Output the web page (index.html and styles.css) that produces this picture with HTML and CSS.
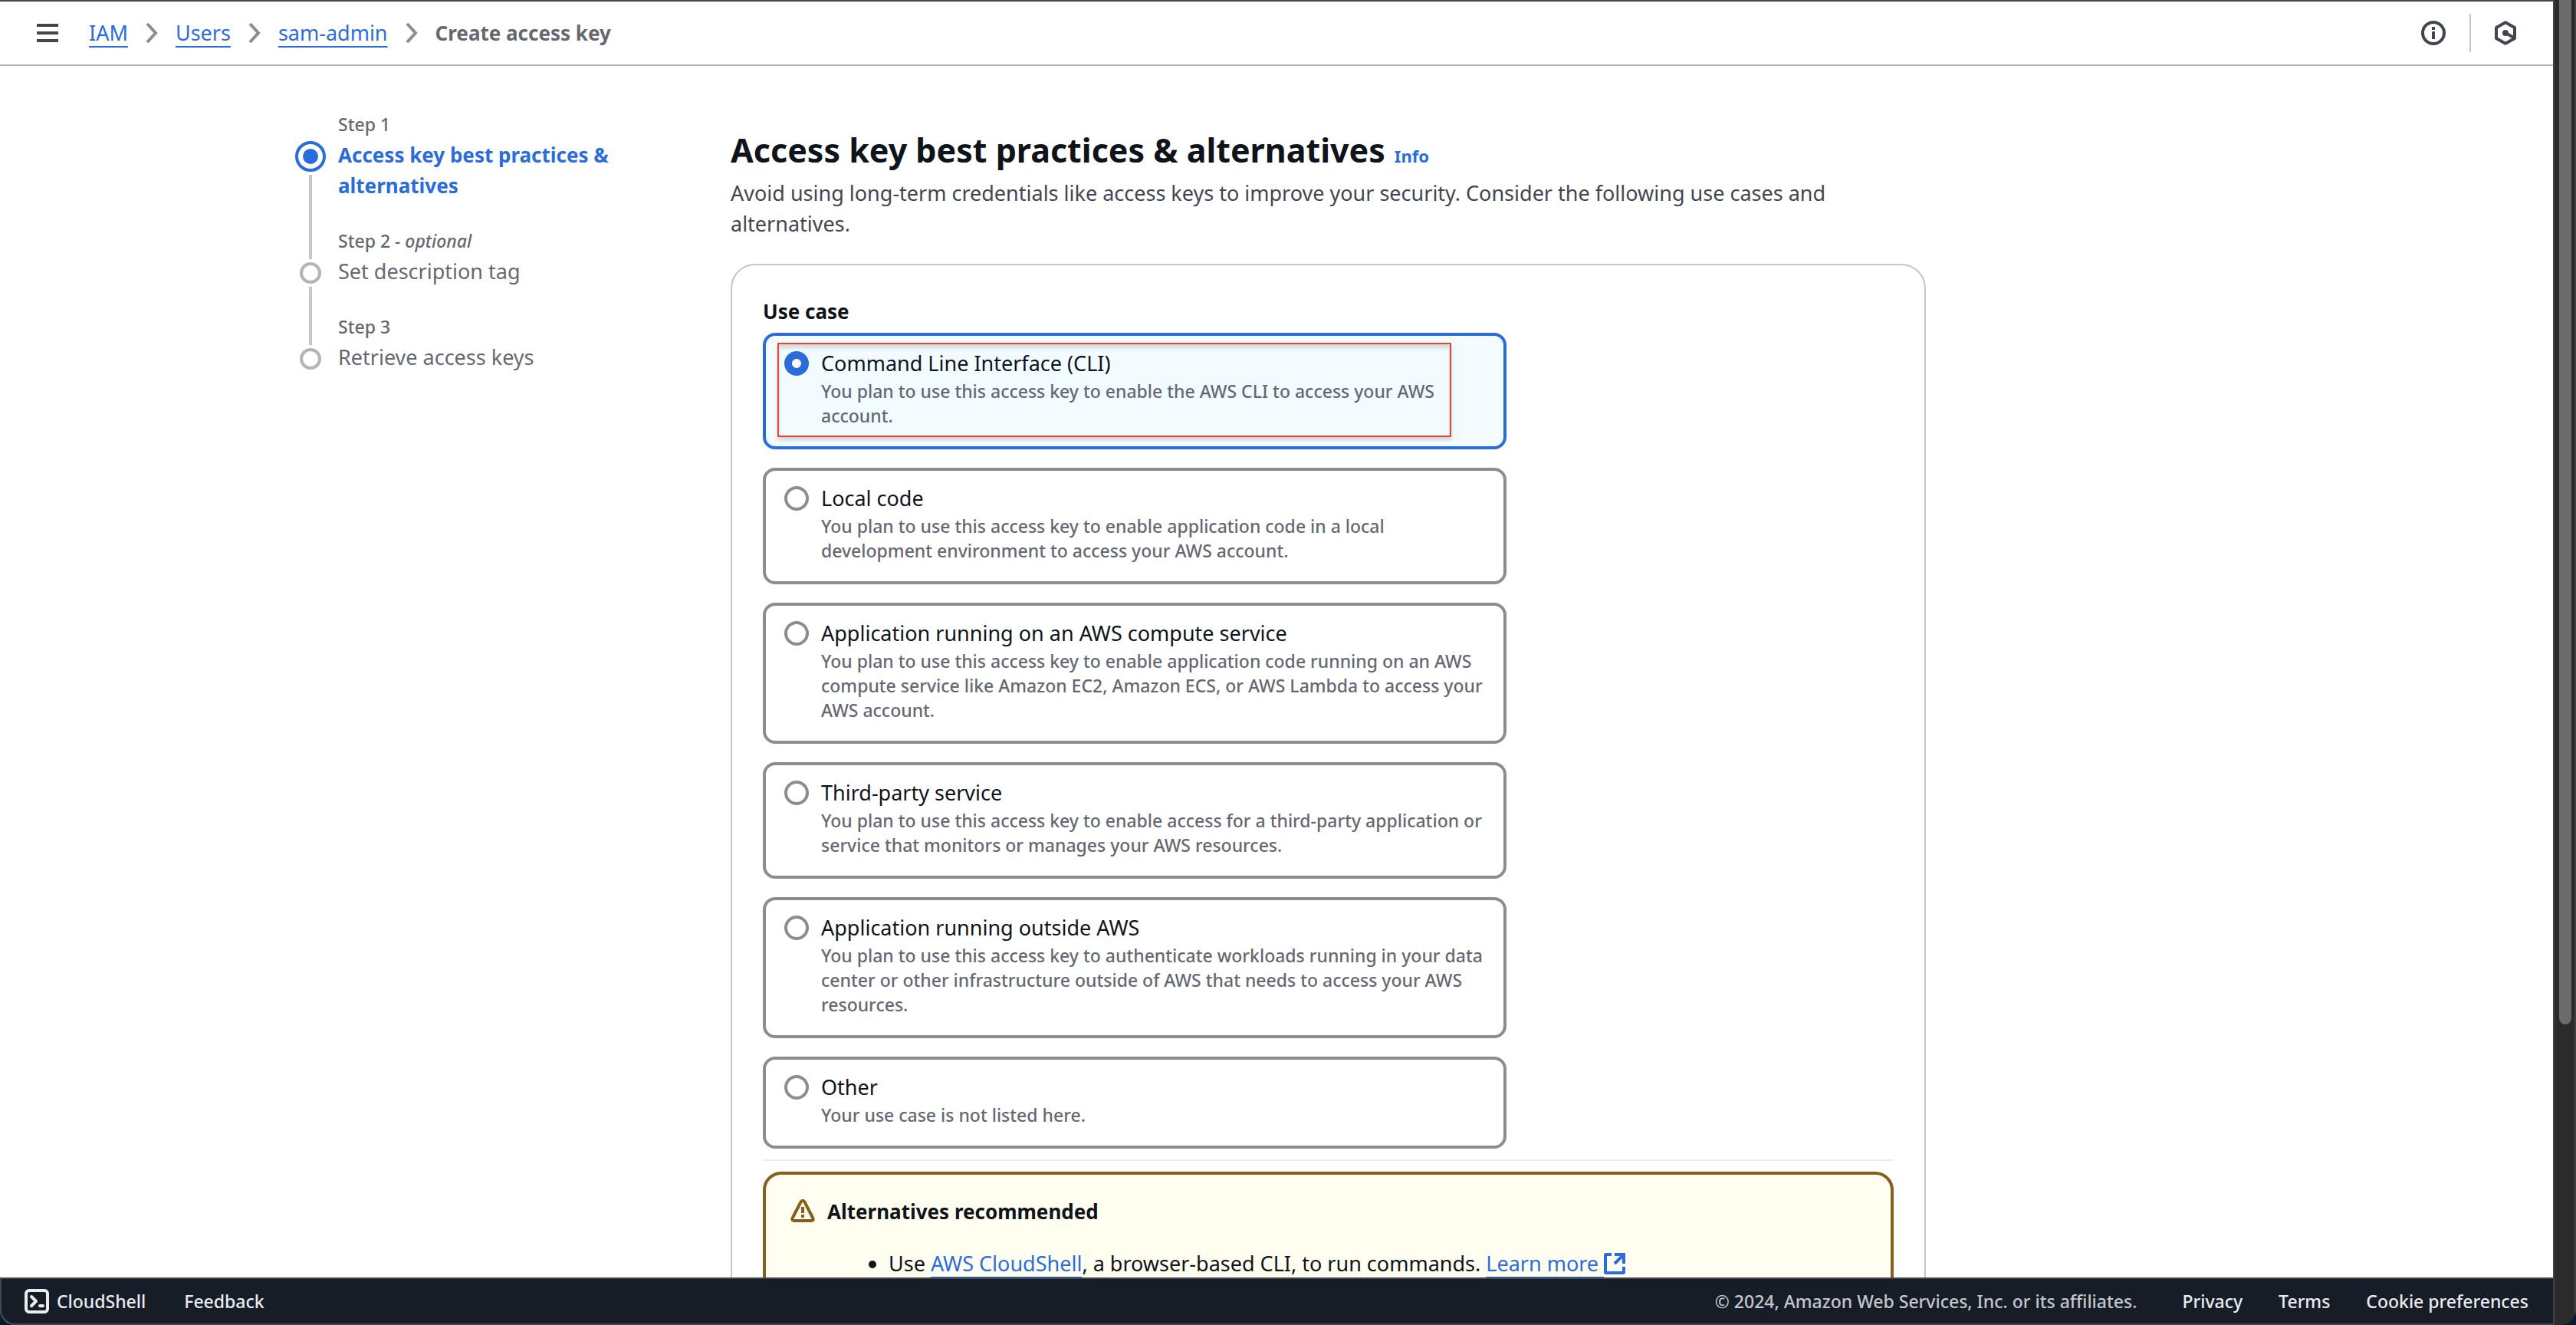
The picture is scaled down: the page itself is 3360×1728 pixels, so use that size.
FILE: index.html
```html
<!DOCTYPE html>
<html lang="en">
<head>
<meta charset="utf-8">
<title>Create access key | IAM</title>
<link rel="stylesheet" href="styles.css">
</head>
<body>
<div class="window">
  <div class="app">
    <header class="topbar">
      <button class="icon-button" type="button" aria-label="Open navigation">
        <svg width="28" height="24" viewBox="0 0 28 24" fill="currentColor"><path d="M0 0h28v4H0zM0 10h28v4H0zM0 20h28v4H0z"/></svg>
      </button>
      <nav class="breadcrumbs" aria-label="Breadcrumbs">
        <a class="link" href="#">IAM</a>
        <svg class="chevron" width="16" height="26" viewBox="0 0 16 26"><path d="M2 1l11 12L2 25"/></svg>
        <a class="link" href="#">Users</a>
        <svg class="chevron" width="16" height="26" viewBox="0 0 16 26"><path d="M2 1l11 12L2 25"/></svg>
        <a class="link" href="#">sam-admin</a>
        <svg class="chevron" width="16" height="26" viewBox="0 0 16 26"><path d="M2 1l11 12L2 25"/></svg>
        <span class="current">Create access key</span>
      </nav>
      <div class="tools">
        <button class="icon-button" type="button" aria-label="Info panel">
          <svg width="32" height="32" viewBox="0 0 32 32" fill="currentColor"><circle cx="16" cy="16" r="14" fill="none" stroke="currentColor" stroke-width="4"/><path d="M14 8h4v4h-4zM14 14h4v10h-4z"/></svg>
        </button>
        <span class="divider"></span>
        <button class="icon-button" type="button" aria-label="Amazon Q">
          <svg width="28" height="32" viewBox="0 0 28 32"><path d="M14 2.300 26 9v14l-12 6.700L2 23V9z" fill="none" stroke="currentColor" stroke-width="4" stroke-linejoin="round"/><path d="M14 16l11 6" stroke="currentColor" stroke-width="4"/><circle cx="14" cy="16" r="4" fill="currentColor"/></svg>
        </button>
      </div>
    </header>

    <div class="scroller">
      <div class="page">
        <ol class="steps">
          <li class="step step-active">
            <div class="rail"><span class="rail-top"></span><span class="dot"></span><span class="rail-rest"></span></div>
            <div class="step-text"><div class="step-label">Step 1</div><div class="step-title">Access key best practices &amp; alternatives</div></div>
          </li>
          <li class="step">
            <div class="rail"><span class="rail-top"></span><span class="dot"></span><span class="rail-rest"></span></div>
            <div class="step-text"><div class="step-label">Step 2 <i>- optional</i></div><div class="step-title">Set description tag</div></div>
          </li>
          <li class="step">
            <div class="rail"><span class="rail-top"></span><span class="dot"></span></div>
            <div class="step-text"><div class="step-label">Step 3</div><div class="step-title">Retrieve access keys</div></div>
          </li>
        </ol>

        <main class="content">
          <div class="heading">
            <h1>Access key best practices &amp; alternatives</h1>
            <a class="info" href="#">Info</a>
          </div>
          <p class="intro">Avoid using long-term credentials like access keys to improve your security. Consider the following use cases and alternatives.</p>

          <section class="card">
            <fieldset class="use-case">
              <legend>Use case</legend>
              <div class="tiles">
                <label class="tile tile-selected">
                  <input type="radio" name="use-case" checked>
                  <span class="tile-text"><span class="tile-title">Command Line Interface (CLI)</span><span class="tile-desc">You plan to use this access key to enable the AWS CLI to access your AWS account.</span></span>
                  <span class="highlight"></span>
                </label>
                <label class="tile">
                  <input type="radio" name="use-case">
                  <span class="tile-text"><span class="tile-title">Local code</span><span class="tile-desc">You plan to use this access key to enable application code in a local development environment to access your AWS account.</span></span>
                </label>
                <label class="tile">
                  <input type="radio" name="use-case">
                  <span class="tile-text"><span class="tile-title">Application running on an AWS compute service</span><span class="tile-desc">You plan to use this access key to enable application code running on an AWS compute service like Amazon EC2, Amazon ECS, or AWS Lambda to access your AWS account.</span></span>
                </label>
                <label class="tile">
                  <input type="radio" name="use-case">
                  <span class="tile-text"><span class="tile-title">Third-party service</span><span class="tile-desc">You plan to use this access key to enable access for a third-party application or service that monitors or manages your AWS resources.</span></span>
                </label>
                <label class="tile">
                  <input type="radio" name="use-case">
                  <span class="tile-text"><span class="tile-title">Application running outside AWS</span><span class="tile-desc">You plan to use this access key to authenticate workloads running in your data center or other infrastructure outside of AWS that needs to access your AWS resources.</span></span>
                </label>
                <label class="tile">
                  <input type="radio" name="use-case">
                  <span class="tile-text"><span class="tile-title">Other</span><span class="tile-desc">Your use case is not listed here.</span></span>
                </label>
              </div>
            </fieldset>
            <hr>
            <div class="alert">
              <svg class="alert-icon" width="32" height="32" viewBox="0 0 32 32"><path d="M13.600 3.400Q16 .4 18.400 3.400L29.300 24.500Q30.500 28 27 28H5Q1.500 28 2.700 24.500Z" fill="none" stroke="currentColor" stroke-width="4" stroke-linejoin="round"/><path d="M14 10h4v8h-4zM14 20h4v4h-4z" fill="currentColor"/></svg>
              <div class="alert-body">
                <h2>Alternatives recommended</h2>
                <ul>
                  <li>Use <a class="link" href="#">AWS CloudShell</a>, a browser-based CLI, to run commands. <a class="link" href="#">Learn more&nbsp;</a><svg class="external" width="28" height="28" viewBox="0 0 28 28"><path d="M10 2H3Q2 2 2 3v22q0 1 1 1h22q1 0 1-1v-7M14 2h12v12M26 2 14 14" fill="none" stroke="currentColor" stroke-width="4"/></svg></li>
                </ul>
              </div>
            </div>
          </section>
        </main>
      </div>
    </div>

    <footer class="footer">
      <button class="footer-button" type="button">
        <svg width="32" height="32" viewBox="0 0 32 32" fill="none" stroke="currentColor" stroke-width="4"><rect x="2" y="2" width="28" height="28" rx="4"/><path d="M9 10l6 6-6 6M20 22h4" stroke-linecap="round" stroke-linejoin="round"/></svg>
        CloudShell
      </button>
      <button class="footer-button" type="button">Feedback</button>
      <div class="legal">
        <span class="copyright">© 2024, Amazon Web Services, Inc. or its affiliates.</span>
        <a href="#">Privacy</a>
        <a href="#">Terms</a>
        <a href="#">Cookie preferences</a>
      </div>
    </footer>
  </div>
  <div class="scrollbar"><div class="thumb"></div></div>
</div>
</body>
</html>
```
FILE: styles.css
```css
* { box-sizing: border-box; }

body {
  margin: 0;
  background: #0a1a2e;
  color: #0f141a;
  font: 400 27px/40px "Noto Sans", sans-serif;
}

button {
  margin: 0;
  padding: 0;
  border: 0;
  background: none;
  color: inherit;
  font: inherit;
}

svg { display: block; flex: none; }

a { color: #2b6cdb; text-decoration: none; }

.link {
  text-decoration: underline;
  text-decoration-thickness: 2px;
  text-underline-offset: 7px;
  text-decoration-skip-ink: none;
}

.window {
  display: flex;
  height: 100vh;
  overflow: hidden;
  border-radius: 0 0 20px 20px;
}

.app {
  display: flex;
  flex: 1;
  flex-direction: column;
  min-width: 0;
  background: #fff;
}

/* Top bar */
.topbar {
  display: flex;
  flex: none;
  align-items: center;
  gap: 40px;
  height: 86px;
  padding: 0 48px;
  border-top: 2px solid #424650;
  border-bottom: 2px solid #b4b4bb;
  color: #424650;
}

.breadcrumbs { display: flex; flex: 1; align-items: center; gap: 23px; }
.chevron { fill: none; stroke: #8c8c94; stroke-width: 4; }
.current { color: #656871; font-size: 26px; font-weight: 700; }

.tools { display: flex; align-items: center; gap: 31px; }
.divider { width: 2px; height: 50px; background: #c6c6cd; }

/* Page grid */
.scroller { flex: 1; min-height: 0; overflow: hidden; }

.page {
  display: grid;
  grid-template-columns: 528px minmax(0, 1559px);
  gap: 40px;
  max-width: 2560px;
  margin: 0 auto;
}

/* Wizard steps */
.steps { margin: 0; padding: 60px 104px 0 0; list-style: none; color: #656871; }
.step { display: flex; gap: 16px; }

.rail {
  display: flex;
  flex: none;
  flex-direction: column;
  align-items: center;
  gap: 4px;
  width: 40px;
}

.rail-top { width: 4px; height: 40px; background: #c6c6cd; }
.rail-rest { flex: 1; width: 4px; background: #c6c6cd; }
.dot { width: 28px; height: 28px; border: 4px solid #b4b4bb; border-radius: 50%; }

.step-active .rail-top { height: 34px; background: none; }
.step-active .dot {
  width: 40px;
  height: 40px;
  padding: 6px;
  border-color: #2b6cdb;
  background: #2b6cdb content-box;
}
.step-active .step-title { color: #2b6cdb; font-size: 26px; font-weight: 700; }

.step-text { padding-bottom: 36px; }
.step-label { margin-bottom: 4px; font-size: 23px; font-weight: 500; line-height: 32px; }

/* Content */
.content { padding-top: 80px; }
.heading { display: flex; align-items: baseline; gap: 12px; margin-bottom: 6px; }
h1 { margin: 0; font-size: 43px; font-weight: 700; line-height: 60px; }
.info { font-size: 22px; font-weight: 700; }
.intro { margin: 0 0 32px; color: #424650; }

.card {
  padding: 40px;
  border: 2px solid #c6c6cd;
  border-radius: 32px;
}

.use-case { min-width: 0; margin: 0; padding: 0; border: 0; }
legend { margin-bottom: 8px; padding: 0; font-size: 26px; font-weight: 700; }

.tiles { display: flex; flex-direction: column; gap: 24px; max-width: 970px; }

.tile {
  position: relative;
  display: flex;
  gap: 16px;
  padding: 16px 20px 24px 24px;
  border: 4px solid #8c8c94;
  border-radius: 16px;
}

.tile-selected { border-color: #2b6cdb; background: #f2fbff; }

.tile input {
  flex: none;
  width: 32px;
  height: 32px;
  margin: 4px 0 0;
  border: 4px solid #8c8c94;
  border-radius: 50%;
  background: #fff;
  appearance: none;
}

.tile input:checked { border: 10px solid #2b6cdb; }

.tile-text { display: flex; flex-direction: column; }
.tile-desc { color: #656871; font-size: 23px; font-weight: 500; line-height: 32px; }

.highlight {
  position: absolute;
  inset: 9px 68px 12px 15px;
  border: 2px solid #e8452c;
  box-shadow: 0 4px 4px rgba(0, 0, 0, .15), inset 0 5px 4px rgba(0, 0, 0, .12);
}

hr { height: 2px; margin: 14px 0; border: 0; background: #ebebf0; }

.alert {
  display: flex;
  gap: 16px;
  padding: 28px 32px;
  border: 4px solid #855f1c;
  border-radius: 24px;
  background: #fffef0;
}

.alert-icon { margin-top: 4px; color: #855f1c; }
.alert h2 { margin: 0 0 28px; font-size: 26px; font-weight: 700; line-height: 40px; }
.alert ul { margin: 0; padding: 0 0 0 80px; }
.external { display: inline-block; color: #2b6cdb; vertical-align: -4px; }

/* Footer */
.footer {
  display: flex;
  flex: none;
  align-items: center;
  gap: 50px;
  height: 62px;
  padding: 0 32px 0 30px;
  border: 2px solid #424650;
  border-right: 0;
  border-bottom-left-radius: 20px;
  background: #161d26;
  color: #ebebf0;
  font-size: 23px;
  font-weight: 500;
  line-height: 32px;
  box-shadow: -20px 20px 0 #0a1a2e;
}

.footer-button { display: flex; align-items: center; gap: 10px; }
.legal { display: flex; gap: 47px; margin-left: auto; }
.legal a { color: inherit; }
.legal .copyright { margin-right: 12px; color: #c6c6cd; }

/* Scroll track */
.scrollbar {
  flex: none;
  width: 30px;
  padding: 0 4px 0 6px;
  border: solid #424242;
  border-width: 0 2px;
  background: #2b2b2b;
}

.thumb { width: 16px; height: 77.3%; border-radius: 0 0 8px 8px; background: #6b6b6b; }
```
